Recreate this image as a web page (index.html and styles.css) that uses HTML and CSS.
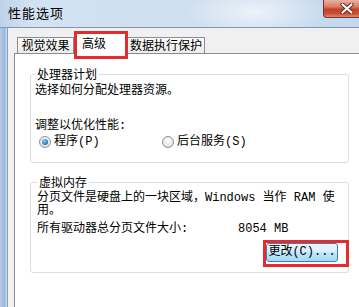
FILE: index.html
```html
<!DOCTYPE html>
<html>
<head>
<meta charset="utf-8">
<link rel="stylesheet" href="styles.css">
</head>
<body>
<div class="window">
  <div class="titlebar">
    <span class="title">性能选项</span>
    <div class="close">
      <svg width="14" height="11" viewBox="0 0 14 11"><path d="M2.5 1.5 L11.5 9.5 M11.5 1.5 L2.5 9.5" stroke="#6a2a20" stroke-width="4.2" stroke-linecap="round"/><path d="M2.5 1.5 L11.5 9.5 M11.5 1.5 L2.5 9.5" stroke="#ffffff" stroke-width="2.2" stroke-linecap="round"/></svg>
    </div>
  </div>
  <div class="main">
    <div class="frame"></div>
    <div class="client">
      <div class="tabs">
        <div class="tab t1">视觉效果</div>
        <div class="tab t2">高级<span class="mark"></span></div>
        <div class="tab t3">数据执行保护</div>
      </div>
      <div class="panel">
        <fieldset class="group g1">
          <legend>处理器计划</legend>
          <p class="line">选择如何分配处理器资源。</p>
          <p class="line l2">调整以优化性能:</p>
          <div class="radios">
            <span class="radio r1"><span class="dot on"></span>程序(P)</span>
            <span class="radio"><span class="dot"></span>后台服务(S)</span>
          </div>
        </fieldset>
        <fieldset class="group g2">
          <legend>虚拟内存</legend>
          <p class="para">分页文件是硬盘上的一块区域，Windows 当作 RAM 使<br>用。</p>
          <div class="size"><span class="size-label">所有驱动器总分页文件大小:</span><span>8054 MB</span></div>
          <div class="actions"><button class="btn">更改(C)...<span class="mark"></span></button></div>
        </fieldset>
      </div>
    </div>
  </div>
</div>
</body>
</html>
```

FILE: styles.css
```css
* { box-sizing: border-box; }
html, body { margin: 0; padding: 0; }
body {
  width: 359px;
  height: 307px;
  overflow: hidden;
  font-family: "Liberation Mono", "Noto Sans CJK SC", monospace;
  font-size: 12px;
  color: #000;
  background: #f0f0f0;
}
.window {
  width: 359px;
  height: 307px;
  display: flex;
  flex-direction: column;
  overflow: hidden;
}
.titlebar {
  height: 28px;
  flex: none;
  display: flex;
  align-items: flex-start;
  border-bottom: 1px solid #8396ae;
  background:
    radial-gradient(ellipse 70px 26px at 255px 12px, rgba(255,255,255,0.65), rgba(255,255,255,0)),
    linear-gradient(to right, #bcd2ea 0px, #d3e2f2 30px, #cfdff0 200px, #c3d8ee 359px);
}
.title {
  font-family: "Noto Sans CJK SC", sans-serif;
  font-size: 13px;
  letter-spacing: 1px;
  line-height: 16px;
  padding: 5px 0 0 8px;
}
.close {
  margin-left: auto;
  margin-right: -8px;
  width: 44px;
  height: 18px;
  flex: none;
  display: flex;
  align-items: center;
  justify-content: center;
  padding-left: 4px;
  border: 1px solid #7a3427;
  border-top: none;
  border-radius: 0 0 4px 4px;
  background: linear-gradient(#eab1a3 0%, #db7a63 40%, #c4412a 55%, #c9503a 80%, #e08a6e 100%);
}
.main {
  flex: 1;
  display: flex;
  min-height: 0;
}
.frame {
  width: 7px;
  flex: none;
  background: linear-gradient(to right, #b5cbe6 0px, #98b6dc 5px, #dde7f2 7px);
}
.client {
  flex: 1;
  min-width: 0;
  display: flex;
  flex-direction: column;
  background: #f0f0f0;
  border-left: 1px solid #8a9cb3;
  padding: 5px 0 0 6px;
}
.tabs {
  display: flex;
  align-items: flex-end;
  height: 20px;
  flex: none;
  padding-left: 3px;
  position: relative;
  z-index: 2;
}
.tab {
  height: 16px;
  line-height: 14px;
  border: 1px solid #898c95;
  border-bottom: none;
  background: linear-gradient(#fbfbfb, #ececec);
  text-align: center;
  white-space: nowrap;
  font-family: "Noto Sans CJK SC", sans-serif;
}
.t1 { width: 57px; }
.t2 {
  width: 53px;
  height: 21px;
  margin-bottom: -1px;
  background: #fff;
  text-align: left;
  padding: 2px 0 0 7px;
  position: relative;
}
.t3 { width: 78px; }
.mark {
  position: absolute;
  border: 3px solid #e42b30;
  pointer-events: none;
}
.t2 .mark {
  left: -1px;
  top: -3px;
  width: 54px;
  height: 28px;
}
.panel {
  flex: 1;
  background: #fff;
  border-top: 1px solid #898c95;
  border-left: 1px solid #898c95;
  padding: 13px 0 0 15px;
}
.group {
  margin: 0;
  min-width: 0;
  width: 319px;
  border: 1px solid #d5dfe5;
  border-radius: 3px;
}
.group legend {
  padding: 0 2px;
  line-height: 14px;
  font-family: "Noto Sans CJK SC", sans-serif;
}
.g1 { padding: 3px 5px 13px 4px; }
.g2 { margin-top: 12px; padding: 3px 6px 10px 6px; }
.line {
  margin: 0;
  line-height: 14px;
}
.l2 { margin-top: 21px; }
.radios {
  display: flex;
  align-items: center;
  height: 14px;
  margin-top: 2px;
}
.radio {
  display: flex;
  align-items: center;
  gap: 3px;
  line-height: 14px;
  white-space: nowrap;
}
.r1 { width: 127px; padding-left: 4px; }
.dot {
  width: 12px;
  height: 12px;
  border-radius: 50%;
  border: 1px solid #8e9194;
  background: radial-gradient(circle at 50% 40%, #ffffff, #e4e4e4 70%, #d0d0d0);
  display: inline-flex;
  align-items: center;
  justify-content: center;
  flex: none;
}
.dot.on::after {
  content: "";
  width: 6px;
  height: 6px;
  border-radius: 50%;
  background: radial-gradient(circle at 40% 35%, #8fd0f5, #2b80c4 60%, #14508a);
}
.para {
  margin: 0;
  line-height: 13px;
  white-space: nowrap;
}
.size {
  display: flex;
  margin-top: 4px;
  line-height: 14px;
  white-space: nowrap;
}
.size-label { width: 201px; flex: none; }
.actions {
  display: flex;
  justify-content: flex-end;
  margin-top: 7px;
  padding-right: 4px;
}
.btn {
  position: relative;
  width: 72px;
  height: 19px;
  padding: 0;
  font: inherit;
  line-height: 17px;
  color: #000;
  border: 1px solid #3c7fb1;
  border-radius: 3px;
  background: linear-gradient(#eaf6fd 0%, #d9f0fc 45%, #bee6fd 50%, #a7d9f5 100%);
  white-space: nowrap;
}
.btn .mark {
  left: -4px;
  top: -4px;
  width: 86px;
  height: 27px;
}
```
